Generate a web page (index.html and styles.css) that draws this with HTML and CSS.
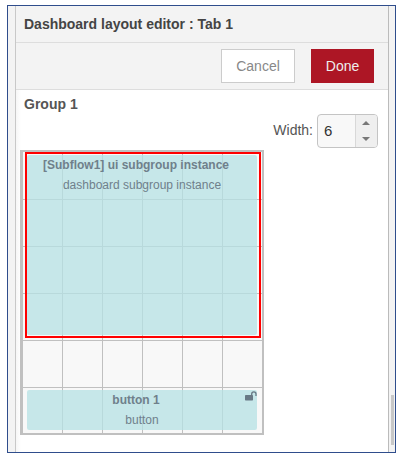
FILE: index.html
```html
<!DOCTYPE html>
<html lang="en">
<head>
<meta charset="utf-8">
<title>Dashboard layout editor</title>
<link rel="stylesheet" href="styles.css">
</head>
<body>
<div class="frame">
  <main class="tray">
    <header class="title">Dashboard layout editor : Tab 1</header>
    <div class="toolbar">
      <button class="btn cancel">Cancel</button>
      <button class="btn done">Done</button>
    </div>
    <section class="content">
      <h2 class="group-name">Group 1</h2>
      <div class="width-row">
        <span class="width-label">Width:</span>
        <div class="spinner">
          <span class="value">6</span>
          <span class="arrows">
            <svg width="8" height="4" viewBox="0 0 8 4"><path d="M0 4L4 0L8 4Z"/></svg>
            <svg width="8" height="4" viewBox="0 0 8 4"><path d="M0 0L4 4L8 0Z"/></svg>
          </span>
        </div>
      </div>
      <div class="grid">
        <div class="selected">
          <div class="widget">
            <div class="name">[Subflow1] ui subgroup instance</div>
            <div class="type">dashboard subgroup instance</div>
          </div>
        </div>
        <div class="widget button-widget">
          <div class="name">button 1</div>
          <div class="type">button</div>
          <svg class="lock" width="12" height="10" viewBox="0 0 12 10"><rect x="0" y="4" width="8" height="5.5" rx=".7"/><path d="M6.7 4.5V3A2.15 2.15 0 0 1 11 3V5" /></svg>
        </div>
      </div>
    </section>
  </main>
  <div class="scroll"><div class="thumb"></div></div>
</div>
</body>
</html>
```
FILE: styles.css
```css
* { box-sizing: border-box; }
body {
  margin: 0;
  background: #fff;
  font-family: "Liberation Sans", Arial, sans-serif;
  font-size: 14px;
  color: #555;
}
.frame {
  display: flex;
  width: 389px;
  height: 448px;
  margin: 5px 0 0 7px;
  padding-left: 7px;
  border: 1px solid #2f4d8c;
  background: #f3f3f3;
}
.tray {
  width: 374px;
  border-left: 1px solid #c8c8c8;
  border-right: 1px solid #bbb;
  background: #fff;
}
.title {
  height: 37px;
  padding-left: 8px;
  border-bottom: 1px solid #ddd;
  background: #f3f3f3;
  color: #444;
  font-weight: bold;
  line-height: 36px;
}
.toolbar {
  display: flex;
  justify-content: flex-end;
  gap: 16px;
  height: 47px;
  padding: 6px 14px 0 0;
  border-bottom: 1px solid #ddd;
  background: #f3f3f3;
}
.btn {
  height: 34px;
  padding: 0;
  border: 1px solid #ccc;
  background: #fff;
  color: #888;
  font: 14px "Liberation Sans", Arial, sans-serif;
}
.cancel { width: 74px; }
.done {
  width: 63px;
  border-color: #ad1625;
  background: #ad1625;
  color: #eee;
}
.content {
  height: 362px;
  padding: 5px 10px 0 4px;
  background: linear-gradient(90deg, #f6f6f6, #fff 5px);
}
.group-name {
  margin: 0 0 1px 4px;
  font-size: 14px;
  line-height: 18px;
}
.width-row {
  display: flex;
  justify-content: flex-end;
  gap: 4px;
  height: 36px;
}
.width-label { line-height: 32px; }
.spinner {
  display: flex;
  width: 61px;
  height: 34px;
  border: 1px solid #c4c4c4;
  border-radius: 4px;
  background: #f8f8f8;
  overflow: hidden;
}
.value {
  flex: 1;
  padding-left: 6px;
  color: #333;
  font-size: 15px;
  line-height: 32px;
}
.arrows {
  display: flex;
  flex-direction: column;
  align-items: center;
  gap: 12px;
  width: 22px;
  padding: 6px 2px 0 0;
  border-left: 1px solid #d8d8d8;
  background: #efefef;
}
.arrows svg { display: block; fill: #777; }
.grid {
  width: 244px;
  height: 285px;
  padding: 0 1px 0 2px;
  border: 2px solid #c0c0c0;
  border-left-width: 3px;
  background:
    repeating-linear-gradient(90deg, transparent 0 39px, #c0c0c0 39px 40px),
    repeating-linear-gradient(180deg, transparent 0 47px, #c0c0c0 47px 48px, transparent 48px 94px, #c0c0c0 94px 95px, transparent 95px 141px, #c0c0c0 141px 142px, transparent 142px 188px, #c0c0c0 188px 189px, transparent 189px 235px, #c0c0c0 235px 236px, transparent 236px 300px),
    #f8f8f8;
}
.selected {
  width: 236px;
  height: 186px;
  padding: 1px 2px 1px 0;
  border: 2px solid #f00;
}
.widget {
  position: relative;
  height: 180px;
  border-radius: 2px;
  background: rgba(181, 225, 228, .75);
  color: #6f808b;
  font-size: 12px;
  line-height: 20px;
  text-align: center;
}
.name {
  padding-right: 12px;
  font-weight: bold;
}
.button-widget {
  width: 230px;
  height: 40px;
  margin: 52px 0 0 2px;
}
.lock {
  position: absolute;
  top: 1px;
  right: 0;
  fill: #697985;
}
.lock path { fill: none; stroke: #697985; stroke-width: 1.3; }
.scroll {
  flex: 1;
  padding: 389px 1px 0 2px;
}
.thumb { height: 50px; background: #c8c8c8; }
```
